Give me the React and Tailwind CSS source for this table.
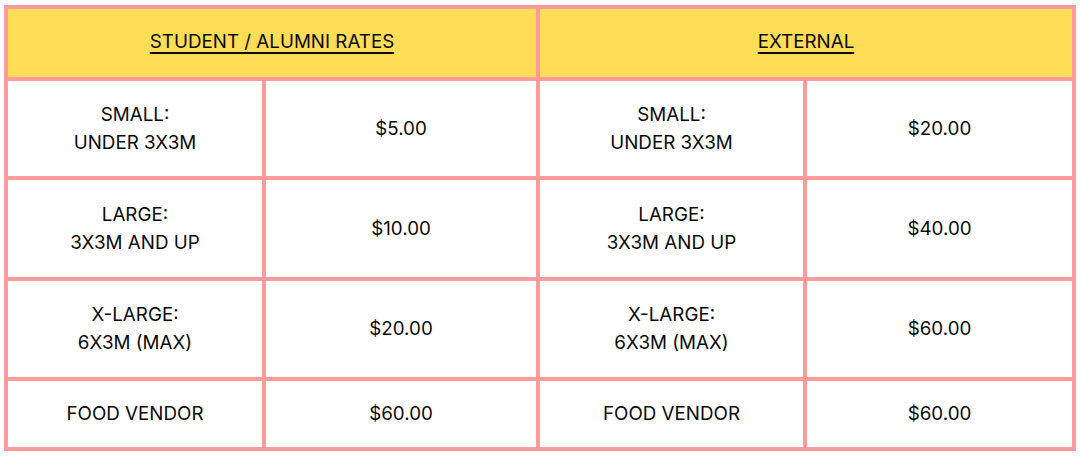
import React from "react";

const studentRates = [
  { label: ["SMALL:", "UNDER 3X3M"], price: "$5.00" },
  { label: ["LARGE:", "3X3M AND UP"], price: "$10.00" },
  { label: ["X-LARGE:", "6X3M (MAX)"], price: "$20.00" },
  { label: ["FOOD VENDOR"], price: "$60.00" },
];

const externalRates = [
  { label: ["SMALL:", "UNDER 3X3M"], price: "$20.00" },
  { label: ["LARGE:", "3X3M AND UP"], price: "$40.00" },
  { label: ["X-LARGE:", "6X3M (MAX)"], price: "$60.00" },
  { label: ["FOOD VENDOR"], price: "$60.00" },
];

const Cell = ({ children }) => (
  <div className="bg-white flex flex-col items-center justify-center text-center leading-[28px]">
    {children}
  </div>
);

const App = () => {
  return (
    <div className="w-[1080px] h-[457px] bg-white pt-[5px] pl-[4px] font-['Inter',sans-serif] text-[18.8px] text-[#0a0a0a]">
      <div className="w-[1072px] grid grid-cols-[254px_270px_263px_265px] grid-rows-[68px_95px_97px_96px_66px] gap-[4px] p-[4px] bg-[#ff9b9b]">
        <div className="col-span-2 bg-[#ffdd57] flex items-center justify-center pb-[2px]">
          <span className="underline underline-offset-[4px] decoration-[2px]">STUDENT / ALUMNI RATES</span>
        </div>
        <div className="col-span-2 bg-[#ffdd57] flex items-center justify-center pb-[2px]">
          <span className="underline underline-offset-[4px] decoration-[2px]">EXTERNAL</span>
        </div>

        {studentRates.map((row, idx) => (
          <React.Fragment key={idx}>
            <Cell>
              {row.label.map((line) => (
                <span key={line}>{line}</span>
              ))}
            </Cell>
            <Cell>{row.price}</Cell>
            <Cell>
              {externalRates[idx].label.map((line) => (
                <span key={line}>{line}</span>
              ))}
            </Cell>
            <Cell>{externalRates[idx].price}</Cell>
          </React.Fragment>
        ))}
      </div>
    </div>
  );
};

export default App;
